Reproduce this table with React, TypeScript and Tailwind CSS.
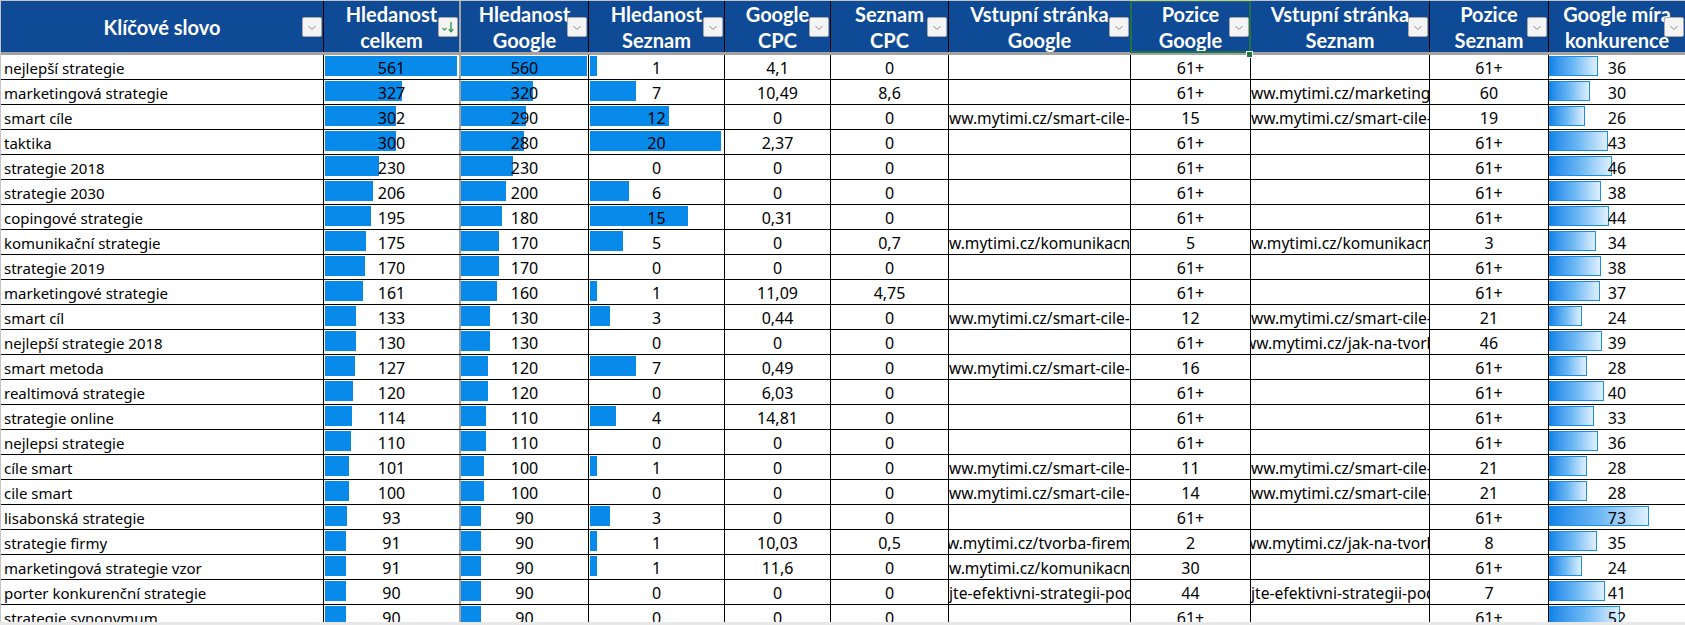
import React from "react";

type Url = { t: string; c: string } | null;

const U = {
  smart: { t: "ww.mytimi.cz/smart-cile-a-jak-na-ne", c: "" },
  kom: { t: "w.mytimi.cz/komunikacni-strategie", c: "" },
  mark: { t: "ww.mytimi.cz/marketingova-strategie", c: "" },
  jak: { t: "ww.mytimi.cz/jak-na-tvorbu-strategie", c: "-ml-[7px]" },
  tvorba: { t: "w.mytimi.cz/tvorba-firemni-strategie", c: "-ml-[2px]" },
  porter: { t: "jte-efektivni-strategii-podniku", c: "" },
};

type Row = [string, number, number, number, string, string, Url, string, Url, string, number];

const rows: Row[] = [
  ["nejlepší strategie", 561, 560, 1, "4,1", "0", null, "61+", null, "61+", 36],
  ["marketingová strategie", 327, 320, 7, "10,49", "8,6", null, "61+", U.mark, "60", 30],
  ["smart cíle", 302, 290, 12, "0", "0", U.smart, "15", U.smart, "19", 26],
  ["taktika", 300, 280, 20, "2,37", "0", null, "61+", null, "61+", 43],
  ["strategie 2018", 230, 230, 0, "0", "0", null, "61+", null, "61+", 46],
  ["strategie 2030", 206, 200, 6, "0", "0", null, "61+", null, "61+", 38],
  ["copingové strategie", 195, 180, 15, "0,31", "0", null, "61+", null, "61+", 44],
  ["komunikační strategie", 175, 170, 5, "0", "0,7", U.kom, "5", U.kom, "3", 34],
  ["strategie 2019", 170, 170, 0, "0", "0", null, "61+", null, "61+", 38],
  ["marketingové strategie", 161, 160, 1, "11,09", "4,75", null, "61+", null, "61+", 37],
  ["smart cíl", 133, 130, 3, "0,44", "0", U.smart, "12", U.smart, "21", 24],
  ["nejlepší strategie 2018", 130, 130, 0, "0", "0", null, "61+", U.jak, "46", 39],
  ["smart metoda", 127, 120, 7, "0,49", "0", U.smart, "16", null, "61+", 28],
  ["realtimová strategie", 120, 120, 0, "6,03", "0", null, "61+", null, "61+", 40],
  ["strategie online", 114, 110, 4, "14,81", "0", null, "61+", null, "61+", 33],
  ["nejlepsi strategie", 110, 110, 0, "0", "0", null, "61+", null, "61+", 36],
  ["cíle smart", 101, 100, 1, "0", "0", U.smart, "11", U.smart, "21", 28],
  ["cile smart", 100, 100, 0, "0", "0", U.smart, "14", U.smart, "21", 28],
  ["lisabonská strategie", 93, 90, 3, "0", "0", null, "61+", null, "61+", 73],
  ["strategie firmy", 91, 90, 1, "10,03", "0,5", U.tvorba, "2", U.jak, "8", 35],
  ["marketingová strategie vzor", 91, 90, 1, "11,6", "0", U.kom, "30", null, "61+", 24],
  ["porter konkurenční strategie", 90, 90, 0, "0", "0", U.porter, "44", U.porter, "7", 41],
  ["strategie synonymum", 90, 90, 0, "0", "0", null, "61+", null, "61+", 52],
];

const cols = [
  "w-[323px] border-r border-black",
  "w-[137px] border-r-2 border-[#a3a3a3]",
  "w-[128px] border-r border-black",
  "w-[136px] border-r border-black",
  "w-[106px] border-r border-black",
  "w-[118px] border-r border-black",
  "w-[182px] border-r border-black",
  "w-[120px] border-r border-black",
  "w-[179px] border-r border-black",
  "w-[119px] border-r border-black",
  "w-[136px]",
];

const headers: string[][] = [
  ["Klíčové slovo"],
  ["Hledanost", "celkem"],
  ["Hledanost", "Google"],
  ["Hledanost", "Seznam"],
  ["Google", "CPC"],
  ["Seznam", "CPC"],
  ["Vstupní stránka", "Google"],
  ["Pozice", "Google"],
  ["Vstupní stránka", "Seznam"],
  ["Pozice", "Seznam"],
  ["Google míra", "konkurence"],
];

function FilterButton({ sorted }: { sorted?: boolean }) {
  return (
    <div className="absolute right-[1px] top-[16px] z-10 flex h-[20px] w-[20px] items-center justify-center rounded-[2px] border border-[#a8a8a8] bg-[#f4f4f4]">
      {sorted ? (
        <svg width="18" height="18" viewBox="0 0 18 18">
          <path d="M3.5 10 L5.5 12 L7.5 10" fill="none" stroke="#3a9a5a" strokeWidth="1.1" />
          <path d="M12 4 L12 13.5" stroke="#2a8a4a" strokeWidth="1.3" />
          <path d="M9.8 11.2 L12 13.8 L14.2 11.2" fill="none" stroke="#2a8a4a" strokeWidth="1.2" />
        </svg>
      ) : (
        <svg width="18" height="18" viewBox="0 0 18 18">
          <path d="M5.5 8 L9 11.5 L12.5 8" fill="none" stroke="#8a8a8a" strokeWidth="1" />
        </svg>
      )}
    </div>
  );
}

function Bar({ w, className }: { w: number; className: string }) {
  if (w <= 0) return null;
  return <div className={className} style={{ width: `${w}px` }} />;
}

function UrlCell({ u, cls }: { u: Url; cls: string }) {
  return (
    <div className={`${cls} flex h-full shrink-0 items-center overflow-hidden whitespace-nowrap pt-[1px] text-[15.6px]`}>
      {u ? <span className={`${u.c} shrink-0`}>{u.t}</span> : null}
    </div>
  );
}

export default function App() {
  return (
    <div className="flex h-[625px] w-[1685px] flex-col overflow-hidden bg-white text-black">
      <div className="h-[622px] overflow-hidden border-l border-t border-[#c4c4c4]">
        {/* header */}
        <div className="flex h-[51px] bg-[#0e4a96] font-['Lato',_'Noto_Sans',_sans-serif] text-[20px] font-bold leading-[26px] text-white">
          {headers.map((h, i) => (
            <div key={i} className={`${cols[i]} relative flex h-full shrink-0 items-center justify-center text-center`}>
              <div className="whitespace-nowrap">
                {h.map((line, j) => (
                  <div key={j}>{line}</div>
                ))}
              </div>
              <FilterButton sorted={i === 1} />
              {i === 7 && (
                <>
                  <div className="absolute -left-[1px] -top-[1px] z-10 h-[53px] w-[121px] border-2 border-[#217346]" />
                  <div className="absolute left-[115px] top-[50px] z-20 h-[7px] w-[7px] border border-white bg-[#217346]" />
                </>
              )}
            </div>
          ))}
        </div>
        <div className="h-[3px] bg-[#a3a3a3]" />
        {/* body */}
        <div className="font-['Noto_Sans',_'Open_Sans',_sans-serif] text-[16px] leading-[20px]">
          {rows.map((r, ri) => (
            <div key={ri} className="flex h-[25px] border-b border-black">
              <div className={`${cols[0]} flex h-full shrink-0 items-center overflow-hidden whitespace-nowrap pl-[3px] pt-[1px] text-[15px]`}>
                {r[0]}
              </div>
              <div className={`${cols[1]} relative flex h-full shrink-0 items-center justify-center pt-[1px]`}>
                <Bar w={(r[1] / 561) * 132} className="absolute left-[1px] top-[1px] h-[20px] bg-[#088aea]" />
                <span className="relative">{r[1]}</span>
              </div>
              <div className={`${cols[2]} relative flex h-full shrink-0 items-center justify-center pt-[1px]`}>
                <Bar w={(r[2] / 560) * 126} className="absolute left-0 top-[1px] h-[20px] bg-[#088aea]" />
                <span className="relative">{r[2]}</span>
              </div>
              <div className={`${cols[3]} relative flex h-full shrink-0 items-center justify-center pt-[1px]`}>
                <Bar w={(r[3] / 20) * 131} className="absolute left-[1px] top-[1px] h-[20px] bg-[#088aea]" />
                <span className="relative">{r[3]}</span>
              </div>
              <div className={`${cols[4]} flex h-full shrink-0 items-center justify-center pt-[1px]`}>{r[4]}</div>
              <div className={`${cols[5]} flex h-full shrink-0 items-center justify-center pt-[1px]`}>{r[5]}</div>
              <UrlCell u={r[6]} cls={cols[6]} />
              <div className={`${cols[7]} flex h-full shrink-0 items-center justify-center pt-[1px]`}>{r[7]}</div>
              <UrlCell u={r[8]} cls={cols[8]} />
              <div className={`${cols[9]} flex h-full shrink-0 items-center justify-center pt-[1px]`}>{r[9]}</div>
              <div className={`${cols[10]} relative flex h-full shrink-0 items-center justify-center pt-[1px]`}>
                <Bar
                  w={r[10] * 1.37}
                  className="absolute left-0 top-[1px] h-[20px] border border-[#1a8cf0] bg-gradient-to-r from-[#0784e8] via-[#6cb8f4] to-[#dff0fe]"
                />
                <span className="relative">{r[10]}</span>
              </div>
            </div>
          ))}
        </div>
      </div>
      <div className="h-[3px] bg-[#e8e8e8]" />
    </div>
  );
}
